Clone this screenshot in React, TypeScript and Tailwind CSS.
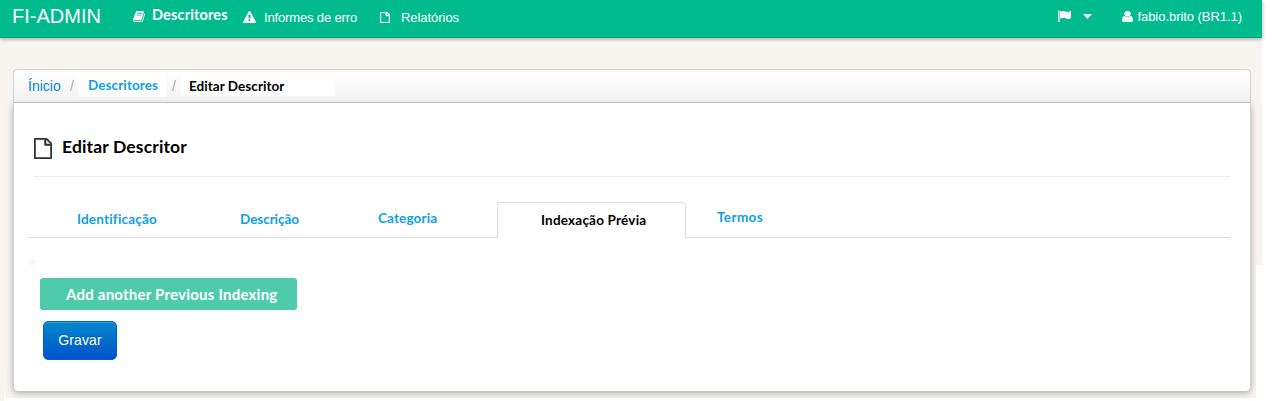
import React from "react";

type IconProps = { className: string; viewBox: string; d: string };

function Icon({ className, viewBox, d }: IconProps) {
  return (
    <svg className={`shrink-0 ${className}`} viewBox={viewBox} fill="currentColor" preserveAspectRatio="none" aria-hidden="true">
      <path d={d} fillRule="evenodd" />
    </svg>
  );
}

const BOOK =
  "M1639 478q40 57 18 129l-275 906q-19 64-76.5 107.5t-122.5 43.5h-923q-77 0-148.5-53.5t-99.5-131.5q-24-67-2-127 0-4 3-27t4-37q1-8-3-21.5t-3-19.5q2-11 8-21t16.5-23.5 16.5-23.5q23-38 45-91.5t30-91.5q3-10 .5-30t-.5-28q3-11 17-28t17-23q21-36 42-92t25-90q1-9-2.5-32t.5-28q4-13 22-30.5t22-22.5q19-26 42.5-84.5t27.5-96.5q1-8-3-25.5t-2-26.5q2-8 9-18t18-23 17-21q8-12 16.5-30.5t15-35 16-36 19.5-32 26.5-23.5 36-11.5 47.5 5.5l-1 3q38-9 51-9h761q74 0 114 56t18 130l-274 906q-36 119-71.5 153.5t-128.5 34.5h-869q-27 0-38 15-11 16-1 43 24 70 144 70h923q29 0 56-15.5t35-41.5l300-987q7-22 5-57 38 15 59 43zm-1064 2q-4 13 2 22.5t20 9.5h608q13 0 25.5-9.5t16.5-22.5l21-64q4-13-2-22.5t-20-9.5h-608q-13 0-25.5 9.5t-16.5 22.5zm-83 256q-4 13 2 22.5t20 9.5h608q13 0 25.5-9.5t16.5-22.5l21-64q4-13-2-22.5t-20-9.5h-608q-13 0-25.5 9.5t-16.5 22.5z";
const WARNING =
  "M1024 1375v-190q0-14-9.5-23.5t-22.5-9.5h-192q-13 0-22.5 9.5t-9.5 23.5v190q0 14 9.5 23.5t22.5 9.5h192q13 0 22.5-9.5t9.5-23.5zm-2-374l18-459q0-12-10-19-13-11-24-11h-220q-11 0-24 11-10 7-10 21l17 457q0 10 10 16.5t24 6.5h185q14 0 23.5-6.5t10.5-16.5zm-14-934l768 1408q35 63-2 126-17 29-46.5 46t-63.5 17h-1536q-34 0-63.5-17t-46.5-46q-37-63-2-126l768-1408q17-31 47-49t65-18 65 18 47 49z";
const FILE =
  "M1468 380q28 28 48 76t20 88v1152q0 40-28 68t-68 28h-1344q-40 0-68-28t-28-68v-1600q0-40 28-68t68-28h896q40 0 88 20t76 48zM1024 136v376h376q-10-29-22-41l-313-313q-12-12-41-22zM1408 1664v-1024h-416q-40 0-68-28t-28-68v-416h-768v1536h1280z";
const USER =
  "M1280 1399q0 109-62.5 187t-150.5 78h-854q-88 0-150.5-78t-62.5-187q0-85 8.5-160.5t31.5-152 58.5-131 94-89 134.5-34.5q131 128 313 128t313-128q76 0 134.5 34.5t94 89 58.5 131 31.5 152 8.5 160.5zm-256-887q0 159-112.5 271.5t-271.5 112.5-271.5-112.5-112.5-271.5 112.5-271.5 271.5-112.5 271.5 112.5 112.5 271.5z";
const FLAG = "M0 0.5h1.500V12H0zM2 1.600C4.500 .6 6 1 7.500 1.600S11 1.800 13 1V8.300C11 9.200 9 9 7.500 8.200S4.500 7.800 2 8.800z";

function Navbar() {
  return (
    <header className="flex h-[38px] w-[1262px] items-start border-b border-[#00a67c] bg-[#00bb8d] text-[13px] leading-4 whitespace-nowrap text-white shadow-[0_1px_4px_rgba(0,0,0,0.35)]">
      <a className="mt-[5px] ml-3 w-[121px] text-[20px] leading-[22px]">FI-ADMIN</a>
      <Icon className="mt-[11px] h-[11px] w-3" viewBox="0 128 1664 1536" d={BOOK} />
      <a className="mt-[7px] ml-[7px] w-[91px] font-[Lato] text-[14.5px] font-bold tracking-[0.15px]">Descritores</a>
      <Icon className="mt-[11px] h-3 w-[13px]" viewBox="0 0 1792 1664" d={WARNING} />
      <a className="mt-[10px] ml-2 w-[116px] tracking-[-0.15px]">Informes de erro</a>
      <Icon className="mt-3 h-[11px] w-[10px] stroke-current stroke-[80]" viewBox="0 0 1536 1792" d={FILE} />
      <a className="mt-[10px] ml-[11px] tracking-[-0.05px]">Relatórios</a>
      <div className="ml-auto flex items-start pr-[20px]">
        <Icon className="mt-[10px] h-3 w-[13px]" viewBox="0 0 13 12" d={FLAG} />
        <Icon className="mt-[14px] mr-[30px] ml-3 h-[5px] w-[9px]" viewBox="0 0 8 4" d="M0 0H8L4 4z" />
        <Icon className="mt-[11px] h-[11px] w-[11px]" viewBox="0 128 1280 1536" d={USER} />
        <a className="mt-[9px] ml-1 tracking-[-0.05px]">fabio.brito (BR1.1)</a>
      </div>
    </header>
  );
}

function Breadcrumb() {
  return (
    <nav className="flex h-[34px] items-start rounded-t-[4px] border border-[#d2d2d2] bg-linear-to-b from-white to-[#f2f2f2] whitespace-nowrap">
      <a className="mt-2 ml-[14px] w-[42px] text-[14px] leading-4 text-[#0088cc]">Ínicio</a>
      <span className="mt-2 w-[9px] text-[14px] leading-4 text-[#aaa]">/</span>
      <a className="mt-[5px] h-[22px] w-[87px] bg-white pl-[9px] font-[Lato] text-[13.5px] leading-5 font-bold tracking-[0.1px] text-[#0d9fe5]">
        Descritores
      </a>
      <span className="mt-2 w-[15px] pl-[6px] text-[14px] leading-4 text-[#aaa]">/</span>
      <span className="mt-[5px] h-[21px] w-[154px] bg-white pl-2 font-[Lato] text-[13.5px] leading-[23px] font-bold tracking-[0.05px] text-black">
        Editar Descritor
      </span>
    </nav>
  );
}

function Tabs() {
  return (
    <div className="mr-5 ml-[14px] flex h-9 items-start border-b border-[#ddd] font-[Lato] text-[13.5px] leading-4 font-bold tracking-[0.15px] whitespace-nowrap text-[#0d9fe5]">
      <a className="mt-[9px] ml-[49px] w-[163px] tracking-[0.2px]">Identificação</a>
      <a className="mt-[9px] w-[138px] tracking-[-0.05px]">Descrição</a>
      <a className="mt-2 w-[119px]">Categoria</a>
      <a className="h-9 w-[189px] rounded-t-[4px] border border-b-0 border-[#ddd] bg-white pt-[9px] pl-[43px] tracking-[0.2px] text-black">
        Indexação Prévia
      </a>
      <a className="mt-[7px] ml-[31px] tracking-[0.4px]">Termos</a>
    </div>
  );
}

export default function App() {
  return (
    <div className="relative h-[401px] w-[1274px] overflow-hidden bg-white font-['Liberation_Sans',sans-serif]">
      <div className="h-[401px] w-[1262px] bg-[#f8f5f0]">
        <Navbar />
        <main className="mt-[31px] ml-[13px] w-[1238px]">
          <Breadcrumb />
          <section className="h-[288px] rounded-b-[5px] border-x border-[#d2d2d2] bg-white pt-[34px] shadow-[0_2px_6px_rgba(0,0,0,0.3)]">
            <div className="mr-5 ml-5 flex h-10 items-start border-b border-[#eee]">
              <Icon className="mt-px h-[21px] w-[18px] stroke-current stroke-[50] text-[#333]" viewBox="0 0 1536 1792" d={FILE} />
              <h1 className="ml-[10px] font-[Lato] text-[17.5px] leading-5 font-bold tracking-[0.15px] text-black">Editar Descritor</h1>
            </div>
            <div className="h-[25px]" />
            <Tabs />
            <div className="mt-[22px] ml-[14px] h-[5px] w-[7px] bg-[#f7f7f7]" />
            <button className="mt-[13px] ml-[26px] block h-8 w-[257px] rounded-[3px] bg-[#4ecbaa] pl-[26px] text-left font-[Lato] text-[15px] leading-8 font-bold tracking-[0.22px] whitespace-nowrap text-white">
              Add another Previous Indexing
            </button>
            <button className="mt-[11px] ml-[29px] block h-[39px] w-[74px] rounded-[5px] border border-[#0062b3] bg-linear-to-b from-[#0088cc] to-[#0050cc] text-[14px] tracking-[0.15px] text-white shadow-[inset_0_1px_0_rgba(255,255,255,0.2)] [text-shadow:0_-1px_0_rgba(0,0,0,0.25)]">
              Gravar
            </button>
          </section>
        </main>
      </div>
      <div className="absolute top-[265px] left-[1256px] h-[136px] w-[6px] bg-white" />
      <div className="absolute top-[398px] left-[4px] h-[3px] w-[1258px] bg-white" />
      <div className="absolute top-[368px] left-[4px] h-[33px] w-px bg-white" />
    </div>
  );
}
